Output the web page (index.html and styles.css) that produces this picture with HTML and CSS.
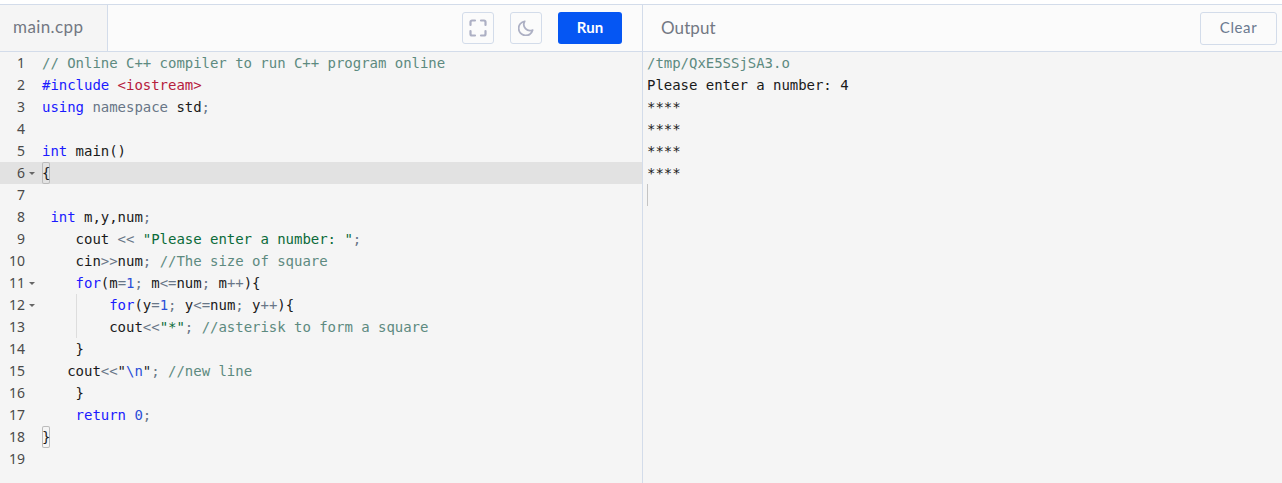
FILE: index.html
```html
<!DOCTYPE html>
<html lang="en">
<head>
    <meta charset="UTF-8">
    <title>Online C++ Compiler</title>
    <link rel="stylesheet" href="styles.css">
</head>
<body>
    <main class="compiler">
        <section class="pane pane-code">
            <div class="bar">
                <div class="tab">main.cpp</div>
                <div class="tools">
                    <button class="icon-btn" type="button" aria-label="Fullscreen">
                        <svg width="18" height="18" viewBox="0 0 18 18" fill="none" stroke="#adb0c4" stroke-width="2.2" stroke-linecap="round" stroke-linejoin="round"><path d="M1.500 6V3A1.500 1.500 0 0 1 3 1.500H6M12 1.500h3A1.500 1.500 0 0 1 16.500 3V6M16.500 12v3a1.500 1.500 0 0 1-1.500 1.500H12M6 16.500H3A1.500 1.500 0 0 1 1.500 15V12"/></svg>
                    </button>
                    <button class="icon-btn" type="button" aria-label="Dark mode">
                        <svg width="16" height="16" viewBox="0 0 18 18" fill="none" stroke="#adb0c4" stroke-width="2" stroke-linecap="round" stroke-linejoin="round"><path d="M7.500 1.500a8 8 0 1 0 9 9.800A7 7 0 0 1 7.500 1.500z"/></svg>
                    </button>
                    <button class="run-btn" type="button">Run</button>
                </div>
            </div>
            <div class="editor">
                <div class="line"><span class="num">1</span><span class="fold"></span><code><span class="c">// Online C++ compiler to run C++ program online</span></code></div>
                <div class="line"><span class="num">2</span><span class="fold"></span><code><span class="k">#include</span> <span class="inc">&lt;iostream&gt;</span></code></div>
                <div class="line"><span class="num">3</span><span class="fold"></span><code><span class="k">using</span> <span class="o">namespace</span> std<span class="o">;</span></code></div>
                <div class="line"><span class="num">4</span><span class="fold"></span><code></code></div>
                <div class="line"><span class="num">5</span><span class="fold"></span><code><span class="k">int</span> main()</code></div>
                <div class="line line-active"><span class="num">6</span><span class="fold arrow"></span><code><span class="bracket">{</span></code></div>
                <div class="line"><span class="num">7</span><span class="fold"></span><code></code></div>
                <div class="line"><span class="num">8</span><span class="fold"></span><code> <span class="k">int</span> m,y,num<span class="o">;</span></code></div>
                <div class="line"><span class="num">9</span><span class="fold"></span><code>    cout <span class="o">&lt;&lt;</span> <span class="s">"Please enter a number: "</span><span class="o">;</span></code></div>
                <div class="line"><span class="num">10</span><span class="fold"></span><code>    cin<span class="o">&gt;&gt;</span>num<span class="o">;</span> <span class="c">//The size of square</span></code></div>
                <div class="line"><span class="num">11</span><span class="fold arrow"></span><code>    <span class="k">for</span>(m<span class="o">=</span><span class="n">1</span><span class="o">;</span> m<span class="o">&lt;=</span>num<span class="o">;</span> m<span class="o">++</span>){</code></div>
                <div class="line"><span class="num">12</span><span class="fold arrow"></span><code>    <span class="guide"></span>    <span class="k">for</span>(y<span class="o">=</span><span class="n">1</span><span class="o">;</span> y<span class="o">&lt;=</span>num<span class="o">;</span> y<span class="o">++</span>){</code></div>
                <div class="line"><span class="num">13</span><span class="fold"></span><code>    <span class="guide"></span>    cout<span class="o">&lt;&lt;</span><span class="s">"*"</span><span class="o">;</span> <span class="c">//asterisk to form a square</span></code></div>
                <div class="line"><span class="num">14</span><span class="fold"></span><code>    }</code></div>
                <div class="line"><span class="num">15</span><span class="fold"></span><code>   cout<span class="o">&lt;&lt;</span>"<span class="n">\n</span>"<span class="o">;</span> <span class="c">//new line</span></code></div>
                <div class="line"><span class="num">16</span><span class="fold"></span><code>    }</code></div>
                <div class="line"><span class="num">17</span><span class="fold"></span><code>    <span class="k">return</span> <span class="n">0</span><span class="o">;</span></code></div>
                <div class="line"><span class="num">18</span><span class="fold"></span><code><span class="bracket">}</span></code></div>
                <div class="line"><span class="num">19</span><span class="fold"></span><code></code></div>
            </div>
        </section>
        <section class="pane pane-output">
            <div class="bar">
                <div class="output-title">Output</div>
                <button class="clear-btn" type="button">Clear</button>
            </div>
            <div class="console">
                <div class="console-line console-path">/tmp/QxE5SSjSA3.o</div>
                <div class="console-line">Please enter a number: 4</div>
                <div class="console-line">****</div>
                <div class="console-line">****</div>
                <div class="console-line">****</div>
                <div class="console-line">****</div>
                <div class="console-line"><span class="cursor"></span></div>
            </div>
        </section>
    </main>
</body>
</html>
```

FILE: styles.css
```css
* {
    padding: 0;
    margin: 0;
    box-sizing: border-box;
}

html, body {
    height: 100%;
    overflow: hidden;
}

body {
    background: #fff;
    padding-top: 4px;
    font-family: "Lato", "Noto Sans", sans-serif;
}

.compiler {
    display: grid;
    grid-template-columns: 643px 1fr;
    height: 479px;
    border-top: 1px solid #d3dcea;
    background: #f5f5f5;
}

.pane {
    min-width: 0;
}

.pane-code {
    border-right: 1px solid #d3dcea;
}

.bar {
    display: flex;
    align-items: center;
    justify-content: space-between;
    height: 47px;
    background: #fbfbfb;
    border-bottom: 1px solid #d3dcea;
}

.tab {
    width: 108px;
    height: 47px;
    padding: 12px 0 0 13px;
    background: #f5f5f5;
    border-right: 1px solid #d3dcea;
    border-bottom: 1px solid #d3dcea;
    color: #737883;
    font-size: 17px;
    letter-spacing: 0.4px;
    line-height: 20px;
}

.tools {
    display: flex;
    gap: 16px;
    padding: 0 20px 0 0;
    margin-bottom: 1px;
}

.icon-btn {
    display: flex;
    align-items: center;
    justify-content: center;
    width: 32px;
    height: 32px;
    background: #fbfbfb;
    border: 1px solid #d3dcea;
    border-radius: 3px;
}

.run-btn {
    width: 64px;
    height: 32px;
    padding-bottom: 2px;
    background: #0556f3;
    border: none;
    border-radius: 3px;
    color: #fff;
    font-family: inherit;
    font-size: 15px;
    font-weight: 700;
}

.line {
    display: flex;
    height: 22px;
    color: #333;
    font-family: "DejaVu Sans Mono", monospace;
    font-size: 14px;
    letter-spacing: -0.03px;
    line-height: 22px;
}

.line-active {
    background: #e2e2e2;
}

.num {
    width: 25px;
    text-align: right;
    color: #4a4a4a;
    font-family: "Noto Sans", sans-serif;
}

.fold {
    position: relative;
    width: 17px;
}

.arrow::after {
    content: "";
    position: absolute;
    left: 4px;
    top: 10px;
    border-left: 3px solid transparent;
    border-right: 3px solid transparent;
    border-top: 3px solid #666;
}

code {
    font-family: inherit;
    white-space: pre;
    color: #1a1a1a;
}

.c {
    color: #5d8a80;
}

.k {
    color: #1a1aff;
}

.inc {
    color: #b5203d;
}

.o {
    color: #687687;
}

.s {
    color: #0b6b3a;
}

.n {
    color: #2b4fd8;
}

.bracket {
    display: inline-block;
    height: 22px;
    box-shadow: inset 0 0 0 1px #bbb;
    border-radius: 2px;
}

.guide {
    display: inline-block;
    width: 1px;
    height: 22px;
    margin-right: -1px;
    background: #ddd;
    vertical-align: top;
}

.output-title {
    padding: 0 0 2px 18px;
    color: #737883;
    font-size: 17px;
    letter-spacing: 0.1px;
}

.clear-btn {
    width: 77px;
    height: 33px;
    margin-right: 5px;
    padding-bottom: 2px;
    background: #fbfbfb;
    border: 1px solid #d3dcea;
    border-radius: 3px;
    color: #6b7a90;
    font-family: inherit;
    font-size: 15px;
    letter-spacing: 0.6px;
}

.console {
    padding-left: 4px;
    font-family: "DejaVu Sans Mono", monospace;
    font-size: 14px;
    letter-spacing: -0.03px;
    line-height: 22px;
    color: #1a1a1a;
}

.console-line {
    height: 22px;
    white-space: pre;
}

.console-path {
    color: #5d8a80;
}

.cursor {
    display: block;
    width: 1px;
    height: 22px;
    background: #c4c4c4;
}
```
